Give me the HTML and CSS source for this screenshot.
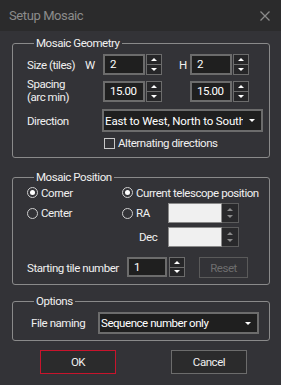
FILE: index.html
```html
<!DOCTYPE html>
<html>
<head>
<meta charset="utf-8">
<link rel="stylesheet" href="styles.css">
</head>
<body>
<div class="dialog">
  <div class="titlebar">
    <span class="title">Setup Mosaic</span>
    <svg class="close" viewBox="0 0 10 10"><path d="M0.5 0.5 L9.5 9.5 M9.5 0.5 L0.5 9.5" stroke="#8a8a8a" stroke-width="1.3" fill="none"/></svg>
  </div>
  <div class="content">
    <fieldset class="group geo">
      <legend>Mosaic Geometry</legend>
      <div class="row r1">
        <span class="lbl l-size">Size (tiles)</span>
        <span class="axis">W</span>
        <div class="spin"><div class="field">2</div><div class="btns"><span class="b up"></span><span class="b down"></span></div></div>
        <span class="axis axis-h">H</span>
        <div class="spin"><div class="field">2</div><div class="btns"><span class="b up"></span><span class="b down"></span></div></div>
      </div>
      <div class="row r2">
        <span class="lbl l-spacing">Spacing<br>(arc min)</span>
        <div class="spin"><div class="field">15.00</div><div class="btns"><span class="b up"></span><span class="b down"></span></div></div>
        <span class="gap-h"></span>
        <div class="spin"><div class="field">15.00</div><div class="btns"><span class="b up"></span><span class="b down"></span></div></div>
      </div>
      <div class="row r3">
        <span class="lbl l-dir">Direction</span>
        <div class="combo combo-dir"><span class="combo-text">East to West, North to South</span><span class="combo-arrow"></span></div>
      </div>
      <div class="row r4">
        <span class="check"></span><span class="check-text">Alternating directions</span>
      </div>
    </fieldset>

    <fieldset class="group pos">
      <legend>Mosaic Position</legend>
      <div class="posgrid">
        <label class="radio"><span class="dot on"></span>Corner</label>
        <label class="radio span2"><span class="dot on"></span>Current telescope position</label>
        <label class="radio"><span class="dot"></span>Center</label>
        <label class="radio"><span class="dot"></span>RA</label>
        <div class="spin dis"><div class="field light"></div><div class="dbtns"><span class="b up"></span><span class="b down"></span></div></div>
        <span></span>
        <span class="dec">Dec</span>
        <div class="spin dis"><div class="field light"></div><div class="dbtns"><span class="b up"></span><span class="b down"></span></div></div>
      </div>
      <div class="row rtile">
        <span class="lbl l-tile">Starting tile number</span>
        <div class="spin small"><div class="field">1</div><div class="btns"><span class="b up"></span><span class="b down"></span></div></div>
        <span class="btn-reset">Reset</span>
      </div>
    </fieldset>

    <fieldset class="group opt">
      <legend>Options</legend>
      <div class="row ropt">
        <span class="lbl l-file">File naming</span>
        <div class="combo combo-file"><span class="combo-text">Sequence number only</span><span class="combo-arrow"></span></div>
      </div>
    </fieldset>

    <div class="buttons">
      <span class="btn ok">OK</span>
      <span class="btn cancel">Cancel</span>
    </div>
  </div>
</div>
</body>
</html>
```
FILE: styles.css
```css
* { box-sizing: border-box; margin: 0; padding: 0; }
html, body { width: 281px; height: 385px; overflow: hidden; }
body {
  background: #333337;
  font-family: Roboto, "Liberation Sans", sans-serif;
  font-size: 11.5px;
  letter-spacing: -0.45px;
  color: #f0f0f0;
}
.dialog { display: flex; flex-direction: column; height: 385px; }
.titlebar {
  height: 31px;
  flex: none;
  background: #2b2b2c;
  display: flex;
  align-items: center;
  justify-content: space-between;
  padding: 0 11px 0 9px;
}
.title { font-size: 13px; letter-spacing: -0.4px; color: #8b8b8b; }
.close { width: 10px; height: 10px; display: block; }

.content { padding: 5px 11px 0 12px; display: flex; flex-direction: column; }

fieldset.group {
  border: 1px solid #8a8a8a;
  border-radius: 3px;
  padding: 0 0 0 14px;
  min-width: 0;
}
legend {
  margin-left: 7px;
  padding: 0 2px;
  height: 14px;
  line-height: 14px;
}
.row { display: flex; align-items: center; }
.lbl { flex: none; white-space: nowrap; }

/* Geometry */
.geo { padding-bottom: 7px !important; }
.r1 { margin-top: 4px; height: 21px; }
.l-size { width: 58px; }
.axis { width: 18px; flex: none; }
.axis-h { width: 11px; margin-left: 17px; }
.r2 { margin-top: 3px; height: 26px; }
.l-spacing { width: 76px; line-height: 13px; }
.gap-h { width: 28px; flex: none; }
.r3 { margin-top: 5px; height: 23px; }
.l-dir { width: 75px; }
.r4 { margin-top: 4px; height: 14px; padding-left: 77px; }
.check { width: 11px; height: 11px; border: 1px solid #c8c8c8; flex: none; margin-right: 3px; }
.check-text { white-space: nowrap; }

/* spinners */
.spin { display: flex; flex: none; gap: 1px; height: 21px; width: 59px; }
.field {
  width: 42px;
  height: 21px;
  border: 2px solid #6c6c6c;
  background: #1f1f1f;
  padding-left: 5px;
  line-height: 17px;
  color: #ffffff;
}
.btns { width: 16px; display: flex; flex-direction: column; }
.btns .b {
  flex: 1;
  border: 1px solid #6c6c6c;
  background: #262628;
  display: flex;
  align-items: center;
  justify-content: center;
}
.btns .b + .b { border-top: none; }
.b::after { content: ""; width: 0; height: 0; border-left: 3px solid transparent; border-right: 3px solid transparent; }
.b.up::after { border-bottom: 3px solid #ffffff; }
.b.down::after { border-top: 3px solid #ffffff; }

.spin.dis { width: 71px; height: 20px; gap: 0; }
.field.light { width: 54px; height: 20px; background: #f0f0f0; border: 1px solid #8a8a8a; }
.dbtns {
  width: 17px;
  display: flex;
  flex-direction: column;
  background: #29292b;
  border: 1px solid #5c5c5c;
  border-left: none;
  padding: 2px 0;
}
.dbtns .b { flex: 1; display: flex; align-items: center; justify-content: center; }
.dbtns .b.up::after { border-bottom-color: #8a8a8a; }
.dbtns .b.down::after { border-top-color: #8a8a8a; }

/* combo */
.combo {
  flex: none;
  width: 161px;
  height: 23px;
  border: 2px solid #6c6c6c;
  background: #1f1f1f;
  display: flex;
  align-items: center;
  overflow: hidden;
}
.combo-text { flex: 1; overflow: hidden; white-space: nowrap; padding-left: 1px; color: #ffffff; }
.combo-dir .combo-text { letter-spacing: -0.15px; }
.combo-arrow { flex: none; width: 18px; height: 19px; display: flex; align-items: center; justify-content: center; }
.combo-arrow::after { content: ""; border-left: 3px solid transparent; border-right: 3px solid transparent; border-top: 3px solid #ffffff; }

/* Position */
.pos { margin-top: 12px; padding-bottom: 6px !important; }
.posgrid {
  margin-top: 2px;
  display: grid;
  grid-template-columns: 95px 46px 72px;
  grid-template-rows: 13px 20px 20px;
  row-gap: 4px;
  align-items: center;
}
.radio { display: flex; align-items: center; white-space: nowrap; }
.span2 { grid-column: span 2; }
.dot {
  width: 11px; height: 11px;
  border: 1px solid #cfcfcf;
  border-radius: 50%;
  margin-right: 3px;
  flex: none;
  display: flex; align-items: center; justify-content: center;
}
.dot.on::after { content: ""; width: 5px; height: 5px; border-radius: 50%; background: #ffffff; }
.dec { padding-left: 17px; }

.rtile { margin-top: 10px; height: 21px; }
.l-tile { width: 100px; }
.spin.small { width: 58px; height: 20px; gap: 2px; align-self: flex-start; }
.spin.small .field { width: 40px; height: 20px; line-height: 16px; }
.btn-reset {
  margin-left: 14px;
  width: 49px; height: 21px;
  border: 1px solid #5a5a5a;
  color: #6e6e6e;
  display: flex; align-items: center; justify-content: center;
}

/* Options */
.opt { margin-top: 9px; padding-bottom: 6px !important; }
.ropt { margin-top: 4px; height: 22px; }
.l-file { width: 71px; padding-left: 4px; }
.combo-file { height: 22px; }

/* buttons */
.buttons { display: flex; margin-top: 9px; }
.btn {
  width: 76px; height: 24px;
  display: flex; align-items: center; justify-content: center;
  background: #2b2b2c;
  border: 1px solid #6c6c6c;
}
.btn.ok { margin-left: 28px; border-color: #c8142c; }
.btn.cancel { margin-left: 55px; }
```
